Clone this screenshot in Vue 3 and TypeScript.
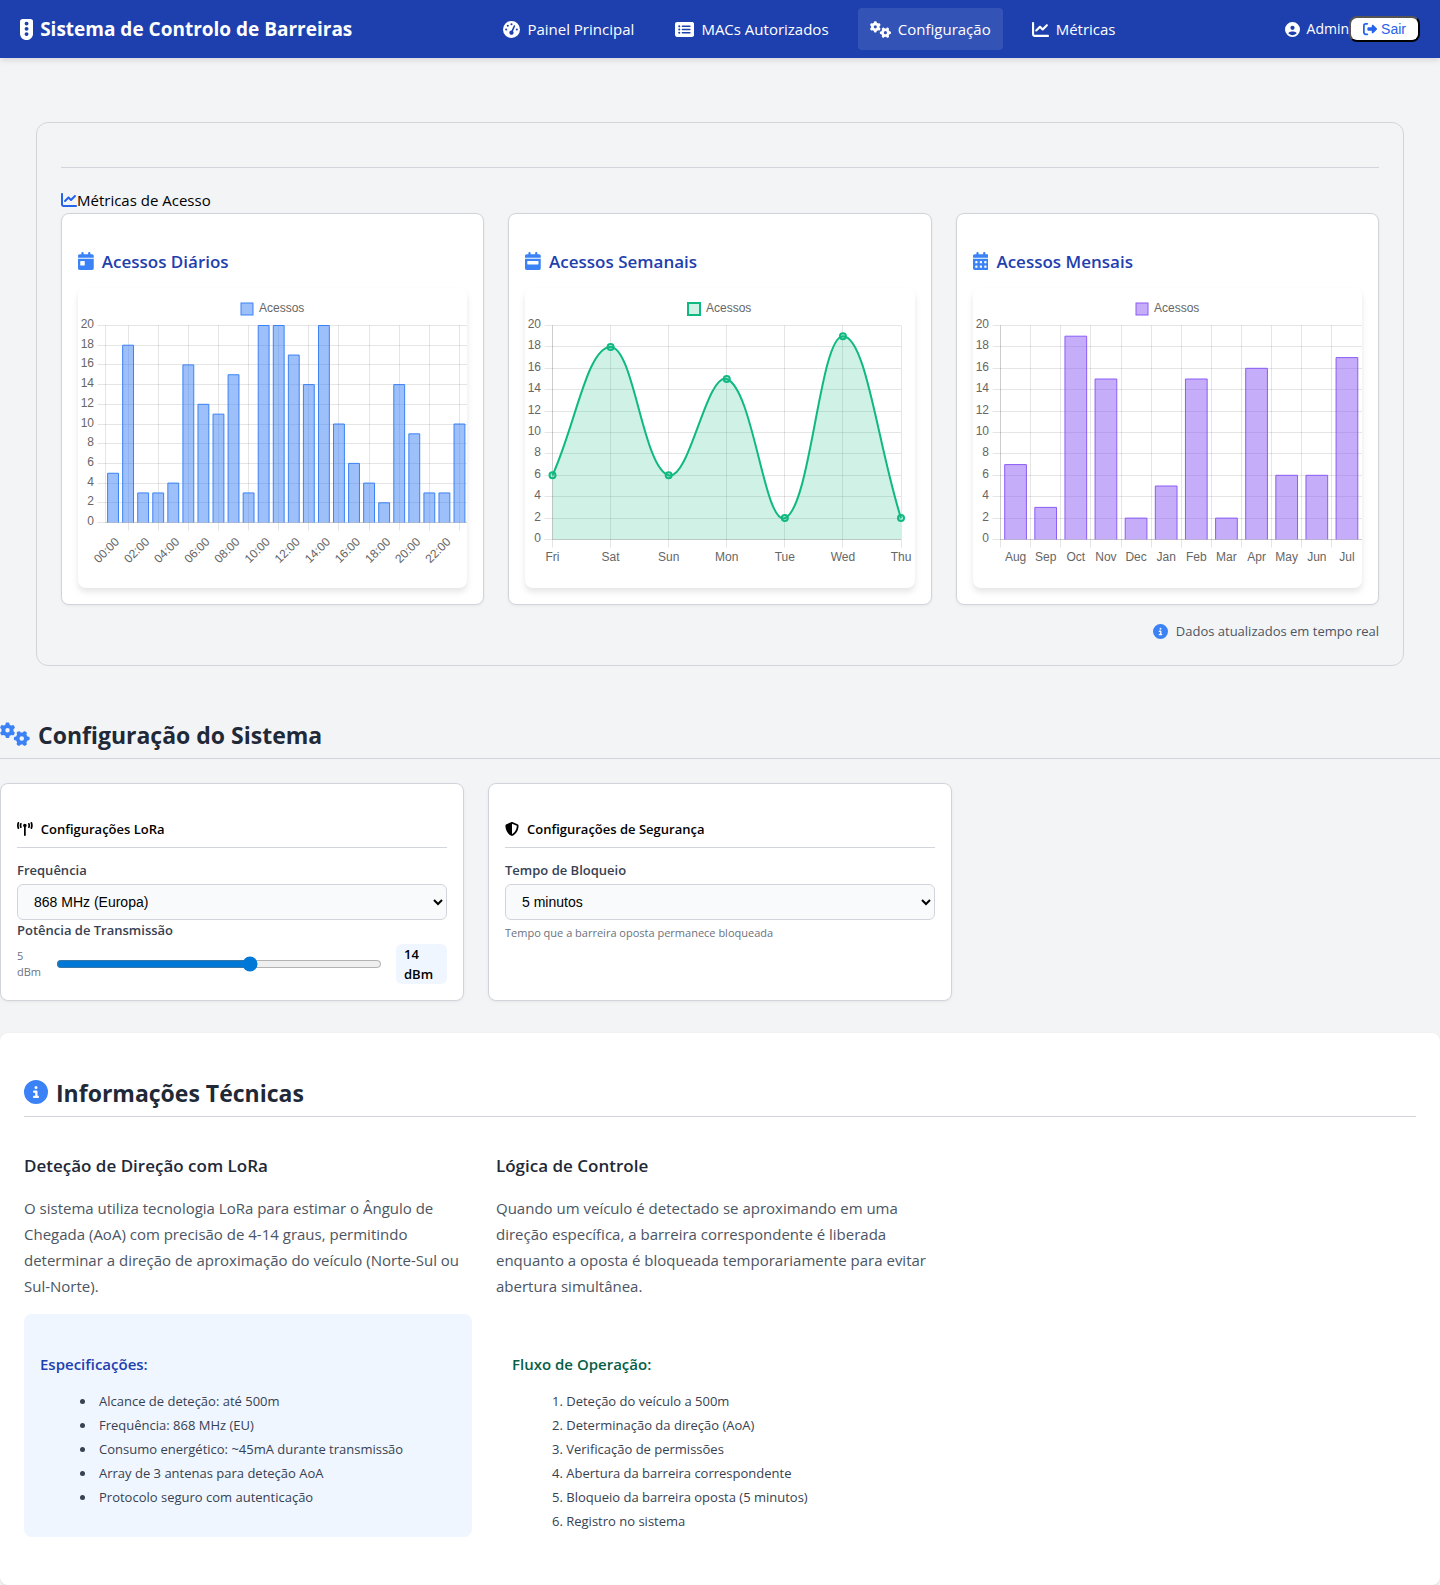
<script setup lang="ts">
import { computed, onBeforeUnmount, onMounted, ref } from 'vue'

interface Icon {
  w: number
  d: string
}

const calendarBase =
  'M128 0c17.7 0 32 14.3 32 32l0 32 128 0 0-32c0-17.7 14.3-32 32-32s32 14.3 32 32l0 32 48 0c26.5 0 48 21.5 48 48l0 48L0 160l0-48C0 85.5 21.5 64 48 64l48 0 0-32c0-17.7 14.3-32 32-32zM0 192l448 0 0 272c0 26.5-21.5 48-48 48L48 512c-26.5 0-48-21.5-48-48L0 192z'

function calendarCell(x: number, y: number): string {
  return `M${x} ${y + 16}l0 32c0 8.8 7.2 16 16 16l32 0c8.8 0 16-7.2 16-16l0-32c0-8.8-7.2-16-16-16l-32 0c-8.8 0-16 7.2-16 16z`
}

const calendarCells = [256, 384]
  .map((y) => [64, 192, 320].map((x) => calendarCell(x, y)).join(''))
  .join('')

const icons: Record<string, Icon> = {
  traffic: {
    w: 320,
    d: 'M64 0C28.7 0 0 28.7 0 64L0 352c0 88.4 71.6 160 160 160s160-71.6 160-160l0-288c0-35.3-28.7-64-64-64L64 0zm96 416a48 48 0 1 1 0-96 48 48 0 1 1 0 96zm48-176a48 48 0 1 1 -96 0 48 48 0 1 1 96 0zm-48-80a48 48 0 1 1 0-96 48 48 0 1 1 0 96z',
  },
  gauge: {
    w: 512,
    d: 'M0 256a256 256 0 1 1 512 0A256 256 0 1 1 0 256zM288 96a32 32 0 1 0 -64 0 32 32 0 1 0 64 0zM256 416c35.3 0 64-28.7 64-64c0-17.4-6.9-33.1-18.1-44.6L366 161.7c5.3-12.1-.2-26.3-12.3-31.6s-26.3 .2-31.6 12.3L257.9 288c-.6 0-1.3 0-1.9 0c-35.3 0-64 28.7-64 64s28.7 64 64 64zM176 144a32 32 0 1 0 -64 0 32 32 0 1 0 64 0zM96 288a32 32 0 1 0 0-64 32 32 0 1 0 0 64zm352-32a32 32 0 1 0 -64 0 32 32 0 1 0 64 0z',
  },
  list: {
    w: 576,
    d: 'M0 96C0 60.7 28.7 32 64 32l448 0c35.3 0 64 28.7 64 64l0 320c0 35.3-28.7 64-64 64L64 480c-35.3 0-64-28.7-64-64L0 96zM128 288a32 32 0 1 0 0-64 32 32 0 1 0 0 64zm32-128a32 32 0 1 0 -64 0 32 32 0 1 0 64 0zM128 384a32 32 0 1 0 0-64 32 32 0 1 0 0 64zm96-248c-13.3 0-24 10.7-24 24s10.7 24 24 24l224 0c13.3 0 24-10.7 24-24s-10.7-24-24-24l-224 0zm0 96c-13.3 0-24 10.7-24 24s10.7 24 24 24l224 0c13.3 0 24-10.7 24-24s-10.7-24-24-24l-224 0zm0 96c-13.3 0-24 10.7-24 24s10.7 24 24 24l224 0c13.3 0 24-10.7 24-24s-10.7-24-24-24l-224 0z',
  },
  gears: {
    w: 640,
    d: 'M308.5 135.3c7.1-6.3 9.9-16.2 6.2-25c-2.3-5.3-4.8-10.5-7.6-15.5L304 89.4c-3-5-6.3-9.9-9.8-14.6c-5.7-7.6-15.7-10.1-24.7-7.1l-28.2 9.3c-10.7-8.8-23-16-36.2-20.9L199 27.1c-1.9-9.3-9.1-16.7-18.5-17.8C173.9 8.4 167.2 8 160.4 8h-.7c-6.8 0-13.5 .4-20.1 1.2c-9.4 1.1-16.6 8.6-18.5 17.8L115 56.1c-13.3 5-25.5 12.1-36.2 20.9L50.5 67.8c-9-3-19-.5-24.7 7.1c-3.5 4.7-6.8 9.6-9.9 14.6l-3 5.3c-2.8 5-5.3 10.2-7.6 15.6c-3.7 8.7-.9 18.6 6.2 25l22.2 19.8C32.6 161.9 32 168.9 32 176s.6 14.1 1.7 20.9L11.5 216.7c-7.1 6.3-9.9 16.2-6.2 25c2.3 5.3 4.8 10.5 7.6 15.6l3 5.2c3 5.1 6.3 9.9 9.9 14.6c5.7 7.6 15.7 10.1 24.7 7.1l28.2-9.3c10.7 8.8 23 16 36.2 20.9l6.1 29.1c1.9 9.3 9.1 16.7 18.5 17.8c6.7 .8 13.5 1.2 20.4 1.2s13.7-.4 20.4-1.2c9.4-1.1 16.6-8.6 18.5-17.8l6.1-29.1c13.3-5 25.5-12.1 36.2-20.9l28.2 9.3c9 3 19 .5 24.7-7.1c3.5-4.7 6.8-9.5 9.8-14.6l3.1-5.4c2.8-5 5.3-10.2 7.6-15.5c3.7-8.7 .9-18.6-6.2-25l-22.2-19.8c1.1-6.8 1.7-13.8 1.7-20.9s-.6-14.1-1.7-20.9l22.2-19.8zM112 176a48 48 0 1 1 96 0 48 48 0 1 1 -96 0zM504.7 500.5c6.3 7.1 16.2 9.9 25 6.2c5.3-2.3 10.5-4.8 15.5-7.6l5.4-3.1c5-3 9.9-6.3 14.6-9.8c7.6-5.7 10.1-15.7 7.1-24.7l-9.3-28.2c8.8-10.7 16-23 20.9-36.2l29.1-6.1c9.3-1.9 16.7-9.1 17.8-18.5c.8-6.7 1.2-13.5 1.2-20.4s-.4-13.7-1.2-20.4c-1.1-9.4-8.6-16.6-17.8-18.5L583.9 307c-5-13.3-12.1-25.5-20.9-36.2l9.3-28.2c3-9 .5-19-7.1-24.7c-4.7-3.5-9.6-6.8-14.6-9.9l-5.3-3c-5-2.8-10.2-5.3-15.6-7.6c-8.7-3.7-18.6-.9-25 6.2l-19.8 22.2c-6.8-1.1-13.8-1.7-20.9-1.7s-14.1 .6-20.9 1.7l-19.8-22.2c-6.3-7.1-16.2-9.9-25-6.2c-5.3 2.3-10.5 4.8-15.6 7.6l-5.2 3c-5.1 3-9.9 6.3-14.6 9.9c-7.6 5.7-10.1 15.7-7.1 24.7l9.3 28.2c-8.8 10.7-16 23-20.9 36.2L315.1 313c-9.3 1.9-16.7 9.1-17.8 18.5c-.8 6.7-1.2 13.5-1.2 20.4s.4 13.7 1.2 20.4c1.1 9.4 8.6 16.6 17.8 18.5l29.1 6.1c5 13.3 12.1 25.5 20.9 36.2l-9.3 28.2c-3 9-.5 19 7.1 24.7c4.7 3.5 9.5 6.8 14.6 9.8l5.4 3.1c5 2.8 10.2 5.3 15.5 7.6c8.7 3.7 18.6 .9 25-6.2l19.8-22.2c6.8 1.1 13.8 1.7 20.9 1.7s14.1-.6 20.9-1.7l19.8 22.2zM464 304a48 48 0 1 1 0 96 48 48 0 1 1 0-96z',
  },
  chart: {
    w: 512,
    d: 'M64 64c0-17.7-14.3-32-32-32S0 46.3 0 64L0 400c0 44.2 35.8 80 80 80l400 0c17.7 0 32-14.3 32-32s-14.3-32-32-32L80 416c-8.8 0-16-7.2-16-16L64 64zm406.6 86.6c12.5-12.5 12.5-32.8 0-45.3s-32.8-12.5-45.3 0L320 210.7l-57.4-57.4c-12.5-12.5-32.8-12.5-45.3 0l-112 112c-12.5 12.5-12.5 32.8 0 45.3s32.8 12.5 45.3 0L240 221.3l57.4 57.4c12.5 12.5 32.8 12.5 45.3 0l128-128z',
  },
  user: {
    w: 512,
    d: 'M399 384.2C376.9 345.8 335.4 320 288 320H224c-47.4 0-88.9 25.8-111 64.2c35.2 39.2 86.2 63.8 143 63.8s107.8-24.7 143-63.8zM0 256a256 256 0 1 1 512 0A256 256 0 1 1 0 256zm256 16a72 72 0 1 0 0-144 72 72 0 1 0 0 144z',
  },
  exit: {
    w: 512,
    d: 'M377.9 105.9L500.7 228.7c7.2 7.2 11.3 17.1 11.3 27.3s-4.1 20.1-11.3 27.3L377.9 406.1c-6.4 6.4-15 9.9-24 9.9c-18.7 0-33.9-15.2-33.9-33.9l0-62.1-128 0c-17.7 0-32-14.3-32-32l0-64c0-17.7 14.3-32 32-32l128 0 0-62.1c0-18.7 15.2-33.9 33.9-33.9c9 0 17.6 3.6 24 9.9zM160 96L96 96c-17.7 0-32 14.3-32 32l0 256c0 17.7 14.3 32 32 32l64 0c17.7 0 32 14.3 32 32s-14.3 32-32 32l-64 0c-53 0-96-43-96-96L0 128C0 75 43 32 96 32l64 0c17.7 0 32 14.3 32 32s-14.3 32-32 32z',
  },
  info: {
    w: 512,
    d: 'M256 512A256 256 0 1 0 256 0a256 256 0 1 0 0 512zM216 336h24V272H216c-13.3 0-24-10.7-24-24s10.7-24 24-24h48c13.3 0 24 10.7 24 24v88h8c13.3 0 24 10.7 24 24s-10.7 24-24 24H216c-13.3 0-24-10.7-24-24s10.7-24 24-24zm40-208a32 32 0 1 1 0 64 32 32 0 1 1 0-64z',
  },
  calendarDay: {
    w: 448,
    d: calendarBase + 'M80 256c-8.8 0-16 7.2-16 16l0 96c0 8.8 7.2 16 16 16l96 0c8.8 0 16-7.2 16-16l0-96c0-8.8-7.2-16-16-16l-96 0z',
  },
  calendarWeek: {
    w: 448,
    d: calendarBase + 'M80 256c-8.8 0-16 7.2-16 16l0 64c0 8.8 7.2 16 16 16l288 0c8.8 0 16-7.2 16-16l0-64c0-8.8-7.2-16-16-16L80 256z',
  },
  calendarMonth: { w: 448, d: calendarBase + calendarCells },
  tower: {
    w: 576,
    d: 'M80.3 44C69.8 69.9 64 98.2 64 128s5.8 58.1 16.3 84c6.6 16.4-1.3 35-17.7 41.7s-35-1.3-41.7-17.7C7.4 202.6 0 166.1 0 128S7.4 53.4 20.9 20C27.6 3.6 46.2-4.3 62.6 2.3S86.9 27.6 80.3 44zM555.1 20C568.6 53.4 576 89.9 576 128s-7.4 74.6-20.9 108c-6.6 16.4-25.3 24.3-41.7 17.7S489.1 228.4 495.7 212c10.5-25.9 16.3-54.2 16.3-84s-5.8-58.1-16.3-84C489.1 27.6 497 9 513.4 2.3s35 1.3 41.7 17.7zM352 128c0 23.7-12.9 44.4-32 55.4V480c0 17.7-14.3 32-32 32s-32-14.3-32-32V183.4c-19.1-11.1-32-31.7-32-55.4c0-35.3 28.7-64 64-64s64 28.7 64 64zM170.6 76.8C163.8 92.4 160 109.7 160 128s3.8 35.6 10.6 51.2c7.1 16.2-.3 35.1-16.5 42.1s-35.1-.3-42.1-16.5c-10.3-23.6-16-49.6-16-76.8s5.7-53.2 16-76.8c7.1-16.2 25.9-23.6 42.1-16.5s23.6 25.9 16.5 42.1zM464 51.2c10.3 23.6 16 49.6 16 76.8s-5.7 53.2-16 76.8c-7.1 16.2-25.9 23.6-42.1 16.5s-23.6-25.9-16.5-42.1c6.8-15.6 10.6-32.9 10.6-51.2s-3.8-35.6-10.6-51.2c-7.1-16.2 .3-35.1 16.5-42.1s35.1 .3 42.1 16.5z',
  },
  shield: {
    w: 512,
    d: 'M256 0c4.6 0 9.2 1 13.4 2.9L457.7 82.8c22 9.3 38.4 31 38.3 57.2c-.5 99.2-41.3 280.7-213.6 363.2c-16.7 8-36.1 8-52.8 0C57.3 420.7 16.5 239.2 16 140c-.1-26.2 16.3-47.9 38.3-57.2L242.7 2.9C246.8 1 251.4 0 256 0zm0 66.8l0 378.1C394 378 431.1 230.1 432 141.4L256 66.8z',
  },
}

const navItems = [
  { icon: 'gauge', label: 'Painel Principal', active: false },
  { icon: 'list', label: 'MACs Autorizados', active: false },
  { icon: 'gears', label: 'Configuração', active: true },
  { icon: 'chart', label: 'Métricas', active: false },
]

const specs = [
  'Alcance de deteção: até 500m',
  'Frequência: 868 MHz (EU)',
  'Consumo energético: ~45mA durante transmissão',
  'Array de 3 antenas para deteção AoA',
  'Protocolo seguro com autenticação',
]

const steps = [
  'Deteção do veículo a 500m',
  'Determinação da direção (AoA)',
  'Verificação de permissões',
  'Abertura da barreira correspondente',
  'Bloqueio da barreira oposta (5 minutos)',
  'Registro no sistema',
]

const frequency = ref('868')
const lockTime = ref('5')
const power = ref(14)

/* Charts: plotted in pixels, the width follows the card. */
const chartBox = ref<HTMLElement[]>([])
const chartWidth = ref(389)
const AXIS = 27.5
const TOP = 37.5
const MAX = 20
const yTicks = Array.from({ length: 11 }, (_, i) => i * 2)

function measure(): void {
  const box = chartBox.value[0]
  if (box) chartWidth.value = box.clientWidth
}
onMounted(() => {
  measure()
  window.addEventListener('resize', measure)
})
onBeforeUnmount(() => window.removeEventListener('resize', measure))

interface Point {
  x: number
  y: number
}

function smoothPath(points: Point[], tension: number): string {
  const controls = points.map((p, i) => {
    const prev = points[i - 1] ?? p
    const next = points[i + 1] ?? p
    const before = Math.hypot(p.x - prev.x, p.y - prev.y)
    const after = Math.hypot(next.x - p.x, next.y - p.y)
    const a = (tension * before) / (before + after)
    const b = (tension * after) / (before + after)
    const dx = next.x - prev.x
    const dy = next.y - prev.y
    return { inX: p.x - a * dx, inY: p.y - a * dy, outX: p.x + b * dx, outY: p.y + b * dy }
  })
  return points
    .map((p, i) =>
      i === 0
        ? `M${p.x} ${p.y}`
        : `C${controls[i - 1].outX} ${controls[i - 1].outY} ${controls[i].inX} ${controls[i].inY} ${p.x} ${p.y}`,
    )
    .join('')
}

interface Source {
  key: string
  title: string
  icon: string
  kind: 'bar' | 'line'
  color: string
  fill: string
  labels: string[]
  values: number[]
  rotated: boolean
}

const sources: Source[] = [
  {
    key: 'day',
    title: 'Acessos Diários',
    icon: 'calendarDay',
    kind: 'bar',
    color: '#3b82f6',
    fill: 'rgba(59, 130, 246, 0.5)',
    labels: Array.from({ length: 24 }, (_, h) => `${String(h).padStart(2, '0')}:00`),
    values: [5, 18, 3, 3, 4, 16, 12, 11, 15, 3, 20, 20, 17, 14, 20, 10, 6, 4, 2, 14, 9, 3, 3, 10],
    rotated: true,
  },
  {
    key: 'week',
    title: 'Acessos Semanais',
    icon: 'calendarWeek',
    kind: 'line',
    color: '#10b981',
    fill: 'rgba(16, 185, 129, 0.2)',
    labels: ['Fri', 'Sat', 'Sun', 'Mon', 'Tue', 'Wed', 'Thu'],
    values: [6, 18, 6, 15, 2, 19, 2],
    rotated: false,
  },
  {
    key: 'month',
    title: 'Acessos Mensais',
    icon: 'calendarMonth',
    kind: 'bar',
    color: '#8b5cf6',
    fill: 'rgba(139, 92, 246, 0.5)',
    labels: ['Aug', 'Sep', 'Oct', 'Nov', 'Dec', 'Jan', 'Feb', 'Mar', 'Apr', 'May', 'Jun', 'Jul'],
    values: [7, 3, 19, 15, 2, 5, 15, 2, 16, 6, 6, 17],
    rotated: false,
  },
]

const charts = computed(() =>
  sources.map((s) => {
    const isLine = s.kind === 'line'
    const bottom = s.rotated ? 234.5 : 251.5
    const right = chartWidth.value - (isLine ? 13 : 0)
    const count = s.values.length
    const step = (right - AXIS) / (isLine ? count - 1 : count)
    const yOf = (v: number) => bottom - ((bottom - TOP) * v) / MAX
    const centers = s.values.map((_, i) => AXIS + step * (isLine ? i : i + 0.5))
    const points = s.values.map((v, i) => ({ x: centers[i], y: yOf(v) }))
    const curve = isLine ? smoothPath(points, 0.4) : ''
    const half = step * 0.36
    const bars = isLine
      ? []
      : points.map((p) => ({
          area: `M${p.x - half} ${bottom}V${p.y}H${p.x + half}V${bottom}z`,
          edge: `M${p.x - half} ${bottom}V${p.y}H${p.x + half}V${bottom}`,
        }))
    const verticals = s.rotated
      ? centers.filter((_, i) => i % 2 === 1)
      : isLine
        ? centers
        : s.values.map((_, i) => AXIS + step * i)
    return {
      ...s,
      isLine,
      bottom,
      right,
      points,
      curve,
      area: isLine ? `${curve}V${bottom}H${AXIS}z` : '',
      bars,
      verticals: verticals.map((x) => Math.floor(x) + 0.5),
      rows: yTicks.map((v) => ({ v, y: Math.floor(yOf(v)) + 0.5 })),
      ticks: s.labels
        .map((text, i) => ({ text, x: centers[i] }))
        .filter((_, i) => !s.rotated || i % 2 === 0),
      legendX: Math.round(chartWidth.value / 2) - 32,
    }
  }),
)
</script>

<template>
  <div class="app">
    <header class="topbar">
      <div class="brand">
        <svg class="ico" :viewBox="`0 0 ${icons.traffic.w} 512`" aria-hidden="true"><path :d="icons.traffic.d" /></svg>
        <span>Sistema de Controlo de Barreiras</span>
      </div>
      <nav class="nav">
        <a v-for="item in navItems" :key="item.label" href="#" class="nav-link" :class="{ active: item.active }">
          <svg class="ico" :viewBox="`0 0 ${icons[item.icon].w} 512`" aria-hidden="true"><path :d="icons[item.icon].d" /></svg>
          <span>{{ item.label }}</span>
        </a>
      </nav>
      <div class="user">
        <svg class="ico" viewBox="0 0 512 512" aria-hidden="true"><path :d="icons.user.d" /></svg>
        <span class="user-name">Admin</span>
        <button type="button" class="logout">
          <svg class="ico" viewBox="0 0 512 512" aria-hidden="true"><path :d="icons.exit.d" /></svg>
          <span>Sair</span>
        </button>
      </div>
    </header>

    <main>
      <section class="metrics">
        <div class="metrics-rule"></div>
        <div class="metrics-title">
          <svg class="ico" viewBox="0 0 512 512" aria-hidden="true"><path :d="icons.chart.d" /></svg>
          <span>Métricas de Acesso</span>
        </div>
        <div class="chart-grid">
          <article v-for="c in charts" :key="c.key" class="card">
            <h3 class="chart-title">
              <svg class="ico" viewBox="0 0 448 512" fill-rule="evenodd" aria-hidden="true"><path :d="icons[c.icon].d" /></svg>
              <span>{{ c.title }}</span>
            </h3>
            <div ref="chartBox" class="chart-box">
              <svg class="plot" :width="chartWidth" height="300" role="img" :aria-label="c.title">
                <g class="grid">
                  <path v-for="row in c.rows" :key="'r' + row.v" :d="`M${AXIS - 8} ${row.y}H${c.right}`" />
                  <path v-if="c.rotated" :d="`M${AXIS} ${TOP}V${c.bottom}`" />
                  <path v-for="x in c.verticals" :key="'v' + x" :d="`M${x} ${TOP}V${c.bottom + 8}`" />
                  <path :d="`M${AXIS} ${c.bottom}H${c.right}`" />
                  <path v-if="!c.rotated" :d="`M${AXIS} ${TOP}V${c.bottom}`" />
                </g>
                <g v-for="(bar, i) in c.bars" :key="'b' + i">
                  <path :d="bar.area" :fill="c.fill" />
                  <path :d="bar.edge" fill="none" :stroke="c.color" />
                </g>
                <g v-if="c.isLine">
                  <path :d="c.area" :fill="c.fill" />
                  <path :d="c.curve" fill="none" :stroke="c.color" stroke-width="2" />
                  <circle
                    v-for="(p, i) in c.points"
                    :key="'p' + i"
                    :cx="p.x"
                    :cy="p.y"
                    r="3"
                    :fill="c.fill"
                    :stroke="c.color"
                    stroke-width="2"
                  />
                </g>
                <g class="labels">
                  <rect
                    :x="c.legendX"
                    y="15"
                    width="12"
                    height="12"
                    :fill="c.fill"
                    :stroke="c.color"
                    :stroke-width="c.isLine ? 2 : 1"
                  />
                  <text :x="c.legendX + 18" y="24">Acessos</text>
                  <text v-for="row in c.rows" :key="'y' + row.v" x="16" :y="row.y + 2" text-anchor="end">{{ row.v }}</text>
                  <template v-if="c.rotated">
                    <text
                      v-for="t in c.ticks"
                      :key="t.text"
                      text-anchor="end"
                      :transform="`translate(${t.x + 7} ${c.bottom + 20}) rotate(-45)`"
                    >{{ t.text }}</text>
                  </template>
                  <template v-else>
                    <text v-for="t in c.ticks" :key="t.text" :x="t.x" :y="c.bottom + 21" text-anchor="middle">{{ t.text }}</text>
                  </template>
                </g>
              </svg>
            </div>
          </article>
        </div>
        <p class="live-note">
          <svg class="ico" viewBox="0 0 512 512" aria-hidden="true"><path :d="icons.info.d" /></svg>
          <span>Dados atualizados em tempo real</span>
        </p>
      </section>

      <section class="config">
        <h2 class="section-title">
          <svg class="ico" viewBox="0 0 640 512" aria-hidden="true"><path :d="icons.gears.d" /></svg>
          <span>Configuração do Sistema</span>
        </h2>
        <div class="config-grid">
          <div class="card">
            <h4 class="config-title">
              <svg class="ico" viewBox="0 0 576 512" aria-hidden="true"><path :d="icons.tower.d" /></svg>
              <span>Configurações LoRa</span>
            </h4>
            <label class="field-label" for="frequency">Frequência</label>
            <select id="frequency" v-model="frequency" class="select">
              <option value="868">868 MHz (Europa)</option>
              <option value="915">915 MHz (EUA)</option>
            </select>
            <label class="field-label" for="power">Potência de Transmissão</label>
            <div class="range-row">
              <span class="range-min">5 dBm</span>
              <input id="power" v-model.number="power" type="range" min="5" max="20" class="range" />
              <output class="range-value" for="power">{{ power }} dBm</output>
            </div>
          </div>
          <div class="card">
            <h4 class="config-title">
              <svg class="ico" viewBox="0 0 512 512" aria-hidden="true"><path :d="icons.shield.d" /></svg>
              <span>Configurações de Segurança</span>
            </h4>
            <label class="field-label" for="lock">Tempo de Bloqueio</label>
            <select id="lock" v-model="lockTime" class="select">
              <option value="5">5 minutos</option>
              <option value="10">10 minutos</option>
            </select>
            <p class="hint">Tempo que a barreira oposta permanece bloqueada</p>
          </div>
        </div>
      </section>

      <section class="tech">
        <h2 class="section-title">
          <svg class="ico" viewBox="0 0 512 512" aria-hidden="true"><path :d="icons.info.d" /></svg>
          <span>Informações Técnicas</span>
        </h2>
        <div class="tech-grid">
          <article>
            <h3 class="tech-title">Deteção de Direção com LoRa</h3>
            <p class="tech-text">
              O sistema utiliza tecnologia LoRa para estimar o Ângulo de Chegada (AoA) com precisão de 4-14 graus,
              permitindo determinar a direção de aproximação do veículo (Norte-Sul ou Sul-Norte).
            </p>
            <div class="box specs">
              <h4>Especificações:</h4>
              <ul>
                <li v-for="s in specs" :key="s">{{ s }}</li>
              </ul>
            </div>
          </article>
          <article>
            <h3 class="tech-title">Lógica de Controle</h3>
            <p class="tech-text">
              Quando um veículo é detectado se aproximando em uma direção específica, a barreira correspondente é
              liberada enquanto a oposta é bloqueada temporariamente para evitar abertura simultânea.
            </p>
            <div class="box flow">
              <h4>Fluxo de Operação:</h4>
              <ol>
                <li v-for="s in steps" :key="s">{{ s }}</li>
              </ol>
            </div>
          </article>
        </div>
      </section>
    </main>
  </div>
</template>

<style>
body {
  margin: 0;
  background: #f3f4f6;
}
</style>

<style scoped>
.app {
  font-family: 'Segoe UI', 'Open Sans', 'Noto Sans', sans-serif;
  font-size: 15px;
  line-height: 24px;
  color: #000;
}
.app *,
.app *::before {
  box-sizing: border-box;
}
h2,
h3,
h4,
p,
ul,
ol {
  margin: 0;
}
.ico {
  height: 1em;
  width: auto;
  fill: currentColor;
  flex: none;
}

/* Top bar */
.topbar {
  display: flex;
  align-items: center;
  justify-content: space-between;
  min-height: 58px;
  padding: 0 20px;
  background: #1e40af;
  color: #fff;
  box-shadow: 0 2px 6px rgba(0, 0, 0, 0.12);
}
.brand {
  display: flex;
  align-items: center;
  gap: 7px;
  font-size: 19px;
  font-weight: 700;
}
.brand .ico {
  height: 21px;
}
.nav {
  display: flex;
  gap: 17px;
}
.nav-link {
  display: flex;
  align-items: center;
  gap: 7px;
  height: 42px;
  padding: 0 12px;
  border-radius: 4px;
  color: #fff;
  text-decoration: none;
}
.nav-link .ico {
  height: 17px;
}
.nav-link.active {
  background: rgba(255, 255, 255, 0.1);
}
.user {
  display: flex;
  align-items: center;
  margin-left: 18px;
  font-size: 14px;
}
.user > .ico {
  height: 15px;
  margin-right: 7px;
}
.logout {
  display: flex;
  align-items: center;
  gap: 4px;
  height: 26px;
  padding: 0 12px;
  border: 2px outset #000;
  border-radius: 8px;
  background: #fff;
  color: #2563eb;
  font: 14px 'Liberation Sans', Arial, sans-serif;
}

/* Cards */
.card {
  padding: 16px;
  border: 1px solid #d1d5db;
  border-radius: 8px;
  background: #fff;
  box-shadow: 0 1px 3px rgba(0, 0, 0, 0.06);
}

/* Metrics */
.metrics {
  margin: 64px 36px 0;
  padding: 24px;
  border: 1px solid #d1d5db;
  border-radius: 12px;
}
.metrics-rule {
  height: 21px;
  margin-bottom: 20px;
  border-bottom: 1px solid #d1d5db;
}
.metrics-title {
  display: flex;
  align-items: center;
  padding-bottom: 1px;
}
.metrics-title .ico {
  height: 16px;
  color: #2563eb;
}
.chart-grid,
.config-grid,
.tech-grid {
  display: grid;
  grid-template-columns: repeat(3, minmax(0, 1fr));
  gap: 24px;
}
.chart-title {
  display: flex;
  align-items: center;
  gap: 8px;
  margin: 20px 0 14px;
  color: #1e40af;
  font-size: 17px;
  font-weight: 600;
}
.chart-title .ico {
  height: 18px;
  margin-bottom: 2px;
  color: #3b82f6;
}
.chart-box {
  height: 300px;
  border-radius: 8px;
  box-shadow: 0 4px 6px rgba(0, 0, 0, 0.1);
}
.plot {
  display: block;
}
.grid path {
  fill: none;
  stroke: rgba(0, 0, 0, 0.1);
}
.labels text {
  fill: #666;
  font: 12px 'Liberation Sans', Arial, sans-serif;
}
.live-note {
  display: flex;
  align-items: center;
  justify-content: flex-end;
  gap: 8px;
  margin-top: 16px;
  color: #4b5563;
  font-size: 13px;
  line-height: 20px;
}
.live-note .ico {
  height: 15px;
  color: #3b82f6;
}

/* Section headings */
.section-title {
  display: flex;
  align-items: center;
  gap: 8px;
  padding-bottom: 7px;
  border-bottom: 1px solid #d1d5db;
  color: #1f2937;
  font-size: 23px;
  font-weight: 700;
  line-height: 32px;
}
.section-title .ico {
  height: 24px;
  margin-bottom: 2px;
  color: #3b82f6;
}

/* Configuration */
.config {
  margin-top: 53px;
}
.config-grid {
  margin-top: 24px;
}
.config-title {
  display: flex;
  align-items: center;
  gap: 8px;
  margin: 19px 0 12px;
  padding-bottom: 8px;
  border-bottom: 1px solid #d1d5db;
  font-size: 13px;
  font-weight: 600;
  line-height: 20px;
}
.config-title .ico {
  height: 14px;
}
.field-label {
  display: block;
  margin-bottom: 4px;
  color: #374151;
  font-size: 13px;
  font-weight: 600;
  line-height: 20px;
}
.select {
  display: block;
  width: 100%;
  height: 36px;
  padding: 0 12px;
  border: 1px solid #d1d5db;
  border-radius: 6px;
  background: #f9fafb;
  color: #000;
  font: 14px 'Liberation Sans', Arial, sans-serif;
}
.range-row {
  display: flex;
  align-items: center;
  gap: 14px;
}
.range-min {
  width: 25px;
  color: #6b7280;
  font-size: 11px;
  line-height: 16px;
}
.range {
  flex: 1;
  min-width: 0;
  margin: 0;
  accent-color: #0078d7;
}
.range-value {
  width: 51px;
  padding: 0 8px;
  border-radius: 6px;
  background: #eff6ff;
  font-size: 13px;
  font-weight: 600;
  line-height: 20px;
}
.hint {
  margin-top: 5px;
  color: #6b7280;
  font-size: 11px;
  line-height: 16px;
}

/* Technical information */
.tech {
  margin-top: 32px;
  padding: 44px 24px 24px;
  border-radius: 8px;
  background: #fff;
  box-shadow: 0 1px 3px rgba(0, 0, 0, 0.1);
}
.tech-title {
  margin: 37px 0 17px;
  color: #1f2937;
  font-size: 17px;
  font-weight: 600;
}
.tech-text {
  color: #4b5563;
  line-height: 26px;
}
.box {
  margin-top: 15px;
  padding: 16px;
  border-radius: 8px;
}
.box h4 {
  margin: 22px 0 13px;
  font-size: 15px;
  font-weight: 600;
}
.box ul,
.box ol {
  margin-bottom: 12px;
  padding-left: 40px;
  list-style-position: inside;
  color: #374151;
  font-size: 13px;
}
.specs {
  background: #eff6ff;
}
.specs h4 {
  color: #1e40af;
}
.flow h4 {
  color: #065f46;
}
</style>
